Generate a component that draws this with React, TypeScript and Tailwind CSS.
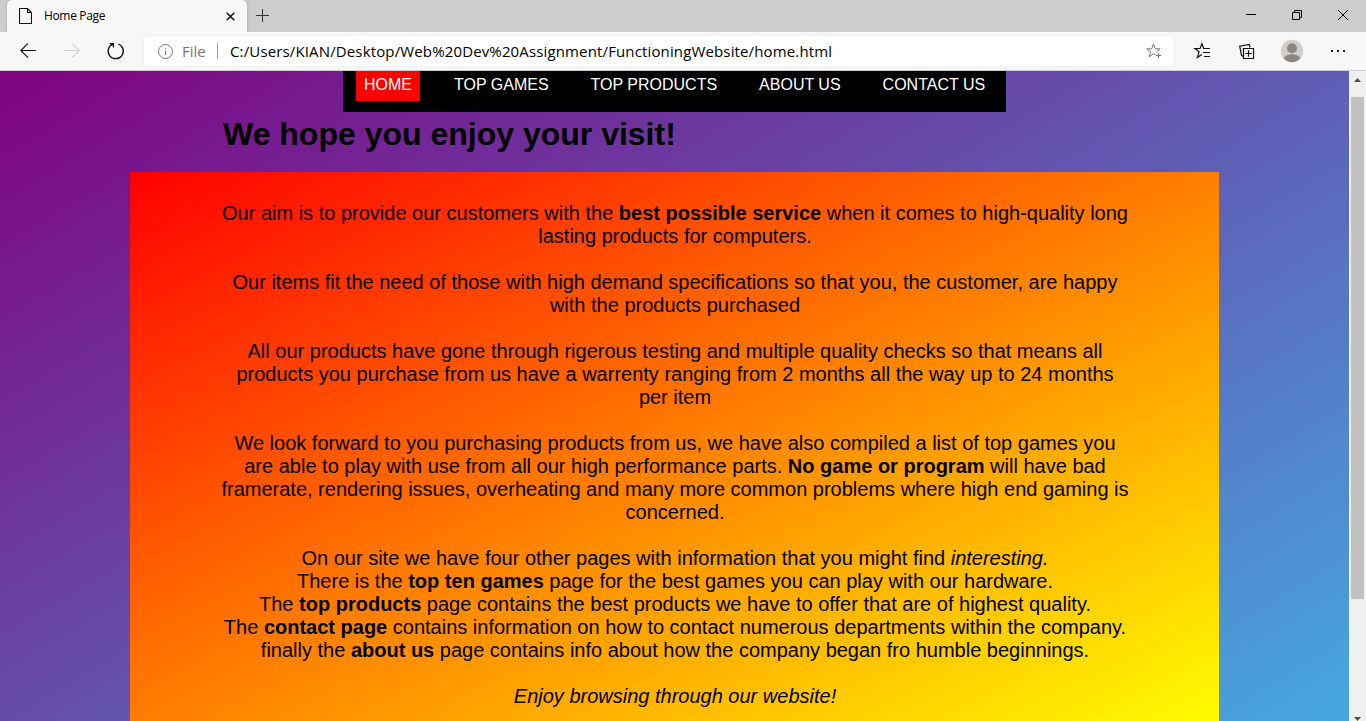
import React from "react";

const NAV = ["HOME", "TOP GAMES", "TOP PRODUCTS", "ABOUT US", "CONTACT US"];

const PARAGRAPHS: React.ReactNode[][] = [
  [
    <>Our aim is to provide our customers with the <b>best possible service</b> when it comes to high-quality long</>,
    <>lasting products for computers.</>,
  ],
  [
    <>Our items fit the need of those with high demand specifications so that you, the customer, are happy</>,
    <>with the products purchased</>,
  ],
  [
    <>All our products have gone through rigerous testing and multiple quality checks so that means all</>,
    <>products you purchase from us have a warrenty ranging from 2 months all the way up to 24 months</>,
    <>per item</>,
  ],
  [
    <>We look forward to you purchasing products from us, we have also compiled a list of top games you</>,
    <>are able to play with use from all our high performance parts. <b>No game or program</b> will have bad</>,
    <>framerate, rendering issues, overheating and many more common problems where high end gaming is</>,
    <>concerned.</>,
  ],
  [
    <>On our site we have four other pages with information that you might find <i>interesting.</i></>,
    <>There is the <b>top ten games</b> page for the best games you can play with our hardware.</>,
    <>The <b>top products</b> page contains the best products we have to offer that are of highest quality.</>,
    <>The <b>contact page</b> contains information on how to contact numerous departments within the company.</>,
    <>finally the <b>about us</b> page contains info about how the company began fro humble beginnings.</>,
  ],
  [<i>Enjoy browsing through our website!</i>],
];

function TabStrip() {
  return (
    <div className="flex h-8 shrink-0 bg-[#cdcdcd]">
      <div className="ml-[7px] flex h-8 w-60 items-center rounded-t-[5px] bg-[#f7f7f7] shadow-[0_0_3px_rgba(0,0,0,0.25)]">
        <svg className="ml-3 h-4 w-[13px] shrink-0" viewBox="0 0 13 16" fill="none" stroke="#111" strokeWidth="1.1">
          <path d="M.5.5H8.5L12.5 4.5V15.5H.5ZM8.5.5V4.5H12.5" />
        </svg>
        <span className="ml-3 w-[182px] shrink-0 whitespace-nowrap text-[12px] tracking-[-0.35px] text-black">Home Page</span>
        <svg className="h-[9px] w-[9px] shrink-0" viewBox="0 0 9 9" stroke="#111" strokeWidth="1.5">
          <path d="M.7.7 8.3 8.3M8.3.7.7 8.3" />
        </svg>
      </div>
      <svg className="ml-[9px] mt-[9px] h-[13px] w-[13px]" viewBox="0 0 13 13" stroke="#333" strokeWidth="1">
        <path d="M0 6.5H13M6.5 0V13" />
      </svg>
      <div className="ml-auto mr-[18px] flex h-[29px] items-center">
        <svg className="mr-[36px] h-[11px] w-[10px]" viewBox="0 0 10 11" stroke="#000" strokeWidth="1">
          <path d="M0 5.5H10" />
        </svg>
        <svg className="mr-[36px] h-[10px] w-[10px]" viewBox="0 0 10 10" fill="none" stroke="#000" strokeWidth="1">
          <path d="M.5 2.5H7.5V9.5H.5ZM2.5 2.5V.5H9.5V7.5H7.5" />
        </svg>
        <svg className="h-[10px] w-[10px]" viewBox="0 0 10 10" stroke="#000" strokeWidth="1">
          <path d="M0 0 10 10M10 0 0 10" />
        </svg>
      </div>
    </div>
  );
}

function Toolbar() {
  return (
    <div className="flex h-[39px] shrink-0 items-center border-b border-[#cfcfcf] bg-[#f7f7f7]">
      <svg className="h-[38px] w-[144px] shrink-0" viewBox="0 0 144 38" fill="none" stroke="#111" strokeWidth="1.1">
        <path d="M36 18.5H20.8M28 11.3 20.8 18.5 28 25.7" />
        <path stroke="#d0d0d0" d="M64 18.5H79.2M72 11.3 79.2 18.5 72 25.7" />
        <path strokeWidth="1.3" d="M118.4 12A7.6 7.6 0 1 1 112.8 12.1M109.6 11.6H113.4V15.4" />
      </svg>
      <div className="flex h-[30px] w-[1030px] shrink-0 items-center rounded-[4px] bg-white shadow-[0_0_3px_rgba(0,0,0,0.06)]">
        <svg className="ml-[14px] h-[15px] w-[15px]" viewBox="0 0 15 15" fill="none" stroke="#777">
          <circle cx="7.5" cy="7.5" r="7" />
          <path d="M7.5 6.5V11M7.5 4V5.2" />
        </svg>
        <span className="ml-[9px] w-[26px] whitespace-nowrap text-[15px] text-[#767676]">File</span>
        <span className="ml-[9px] h-4 w-px bg-[#999]" />
        <span className="ml-3 whitespace-nowrap text-[15px] tracking-[0.14px] text-black">
          C:/Users/KIAN/Desktop/Web%20Dev%20Assignment/FunctioningWebsite/home.html
        </span>
        <svg className="ml-auto mr-3 h-4 w-4" viewBox="0 0 16 16" fill="none" stroke="#777" strokeWidth="1">
          <path d="M9.5 11.8 7.5 10.6 3 14 4.6 8.8.8 5.8H5.7L7.5 1 9.3 5.8H14.2L11 8.5M12.5 10V15M10 12.5H15" />
        </svg>
      </div>
      <svg className="h-[38px] w-[192px] shrink-0" viewBox="0 0 192 38" fill="none" stroke="#111" strokeWidth="1.2">
        <path d="M36 16.5H29.7L27.9 11.8 26.1 16.5H21L25.1 19.7 23.4 25.6 27.8 22.5" />
        <path d="M30 16.5H36M29 20.5H36M30 24.5H36" />
        <path d="M69 24.2 67.5 23.4 65.7 14.2 75.3 12.4 76 15.5M69.5 16.5H79.5V26.5H69.5ZM74.5 18.3V24.7M71.3 21.5H77.7" />
        <g stroke="none">
          <circle cx="118" cy="19" r="11.2" fill="#d2d0ce" />
          <circle cx="118" cy="16.3" r="5" fill="#8a8683" />
          <path d="M110 26.8C110 20.8 126 20.8 126 26.8A11.2 11.2 0 0 1 110 26.8Z" fill="#8a8683" />
          <path fill="#222" d="M157 18h2v2h-2zM163 18h2v2h-2zM169 18h2v2h-2z" />
        </g>
      </svg>
    </div>
  );
}

function Scrollbar() {
  return (
    <div className="flex w-[17px] shrink-0 flex-col items-center bg-[#f0f0f0]">
      <svg className="h-[26px] w-[17px] shrink-0" viewBox="0 0 17 26" fill="#505050">
        <path d="M5 11 8.5 7 12 11Z" />
      </svg>
      <div className="h-[502px] w-[13px] shrink-0 bg-[#c1c1c1]" />
      <svg className="mt-auto h-[5px] w-[17px] shrink-0" viewBox="0 0 17 5" fill="#505050">
        <path d="M5 1H12L8.5 5Z" />
      </svg>
    </div>
  );
}

export default function App() {
  return (
    <div className="flex h-[721px] w-[1366px] flex-col overflow-hidden font-['Open_Sans','Noto_Sans',sans-serif]">
      <TabStrip />
      <Toolbar />
      <div className="flex min-h-0 flex-1">
        <main className="flex w-[1349px] shrink-0 flex-col overflow-hidden bg-[linear-gradient(to_bottom_right,#800080,#40b8e8)] bg-[length:1349px_800px] bg-[position:0_-12px] font-['Liberation_Sans',Arial,sans-serif] text-black">
          <nav className="ml-[343px] flex h-[41px] w-[663px] shrink-0 items-start gap-[26px] bg-black pl-[13px]">
            {NAV.map((label, i) => (
              <a
                key={label}
                className={
                  i === 0
                    ? "h-[30px] whitespace-nowrap bg-[#ff0000] px-2 pt-[5px] text-[16px] leading-[18px] text-white"
                    : "h-[30px] whitespace-nowrap px-2 pt-[5px] text-[16px] leading-[18px] text-white"
                }
              >
                {label}
              </a>
            ))}
          </nav>
          <h1 className="ml-[223px] mt-1 h-[56px] shrink-0 whitespace-nowrap text-[32px] font-bold leading-[37px]">
            We hope you enjoy your visit!
          </h1>
          <section className="ml-[130px] flex h-[560px] w-[1089px] shrink-0 flex-col gap-[23px] bg-[linear-gradient(to_bottom_right,#ff0000,#ffff00)] pl-px pt-[30px] text-center text-[20px] leading-[23px]">
            {PARAGRAPHS.map((lines, i) => (
              <p key={i}>
                {lines.map((line, j) => (
                  <span key={j} className="block whitespace-nowrap">
                    {line}
                  </span>
                ))}
              </p>
            ))}
          </section>
        </main>
        <Scrollbar />
      </div>
    </div>
  );
}
